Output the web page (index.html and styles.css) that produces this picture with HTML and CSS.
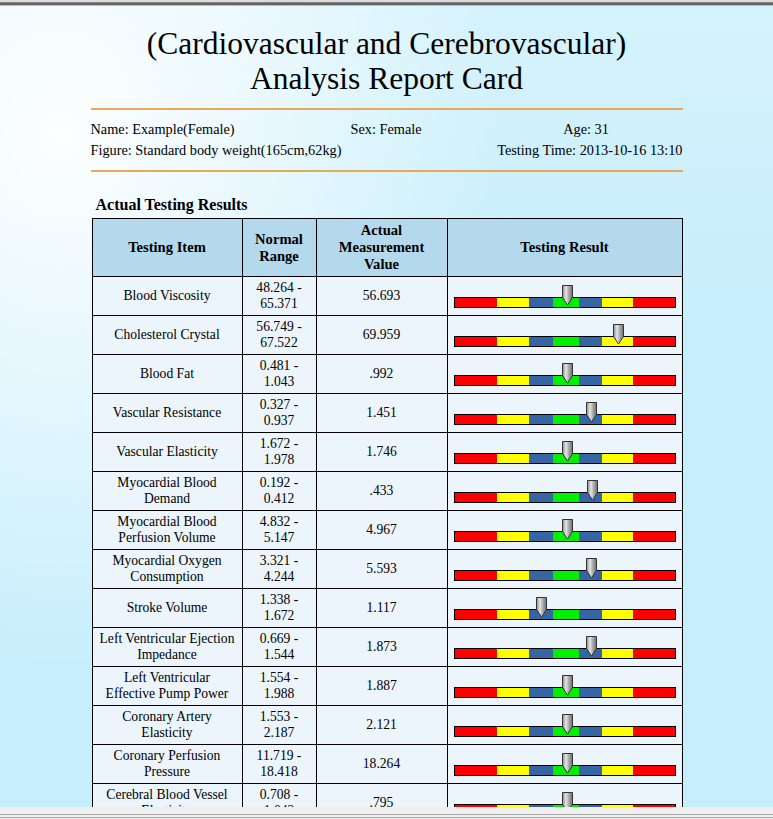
FILE: index.html
```html
<!DOCTYPE html>
<html>
<head>
<meta charset="utf-8">
<link rel="stylesheet" href="styles.css">
</head>
<body>
<div class="frame">
  <div class="topbar"></div>
  <div class="viewport">
    <div class="report">
      <h1 class="title">(Cardiovascular and Cerebrovascular)<br>Analysis Report Card</h1>
      <div class="info">
        <span class="c1">Name: Example(Female)</span>
        <span class="c2">Sex: Female</span>
        <span class="c3">Age: 31</span>
        <span class="c12">Figure: Standard body weight(165cm,62kg)</span>
        <span class="c3r">Testing Time: 2013-10-16 13:10</span>
      </div>
      <h2 class="section">Actual Testing Results</h2>
      <table class="results">
        <colgroup><col class="w1"><col class="w2"><col class="w3"><col class="w4"></colgroup>
        <thead>
          <tr><th>Testing Item</th><th>Normal<br>Range</th><th>Actual<br>Measurement<br>Value</th><th>Testing Result</th></tr>
        </thead>
        <tbody id="rows"></tbody>
      </table>
    </div>
  </div>
  <div class="bottombar"><div class="bl1"></div><div class="bl2"></div></div>
</div>
<script>
var data = [
  ["Blood Viscosity","48.264 -<br>65.371","56.693",108],
  ["Cholesterol Crystal","56.749 -<br>67.522","69.959",159],
  ["Blood Fat","0.481 -<br>1.043",".992",108],
  ["Vascular Resistance","0.327 -<br>0.937","1.451",132],
  ["Vascular Elasticity","1.672 -<br>1.978","1.746",108],
  ["Myocardial Blood<br>Demand","0.192 -<br>0.412",".433",133],
  ["Myocardial Blood<br>Perfusion Volume","4.832 -<br>5.147","4.967",108],
  ["Myocardial Oxygen<br>Consumption","3.321 -<br>4.244","5.593",132],
  ["Stroke Volume","1.338 -<br>1.672","1.117",82],
  ["Left Ventricular Ejection<br>Impedance","0.669 -<br>1.544","1.873",132],
  ["Left Ventricular<br>Effective Pump Power","1.554 -<br>1.988","1.887",108],
  ["Coronary Artery<br>Elasticity","1.553 -<br>2.187","2.121",108],
  ["Coronary Perfusion<br>Pressure","11.719 -<br>18.418","18.264",108],
  ["Cerebral Blood Vessel<br>Elasticity","0.708 -<br>1.042",".795",108]
];
var ptr = '<svg class="ptr" width="11" height="21" viewBox="0 0 11 21"><defs><linearGradient id="g" x1="0" x2="1" y1="0" y2="0"><stop offset="0" stop-color="#8a8a8a"/><stop offset="0.35" stop-color="#e6e6e6"/><stop offset="0.6" stop-color="#b0b0b0"/><stop offset="1" stop-color="#6e6e6e"/></linearGradient></defs><polygon points="0.5,0.5 10.5,0.5 10.5,12.5 5.5,20 0.5,12.5" fill="url(#g)" stroke="#333" stroke-width="1"/></svg>';
var html = "";
data.forEach(function(r){
  html += '<tr><td>'+r[0]+'</td><td>'+r[1]+'</td><td>'+r[2]+'</td><td><div class="gauge"><div class="bar"><i class="r1"></i><i class="y1"></i><i class="b1"></i><i class="g"></i><i class="b2"></i><i class="y2"></i><i class="r2"></i></div><span class="pin" style="left:'+r[3]+'px">'+ptr+'</span></div></td></tr>';
});
document.getElementById("rows").innerHTML = html;
</script>
</body>
</html>
```

FILE: styles.css
```css
html, body {
  margin: 0;
  padding: 0;
}
body {
  font-family: "Liberation Serif", "Times New Roman", serif;
  color: #000;
  background: #c6eefc;
}
.frame {
  width: 773px;
  height: 819px;
  display: flex;
  flex-direction: column;
  overflow: hidden;
}
.topbar {
  height: 6px;
  flex: none;
  background: linear-gradient(#dcdcdc 0, #dcdcdc 2px, #8a8a8a 2px, #5c5c5c 4px, #6a6a6a 5px, #bcbcbc 5px, #bcbcbc 6px);
}
.viewport {
  flex: 1;
  overflow: hidden;
  background:
    radial-gradient(ellipse 440px 540px at 60px 130px, rgba(255,255,255,0.95) 0%, rgba(255,255,255,0.55) 45%, rgba(255,255,255,0) 100%),
    linear-gradient(180deg, #d6f3fd 0%, #c6eefc 40%, #c6eefc 100%);
}
.bottombar {
  height: 12px;
  flex: none;
  background: #efefef;
  display: flex;
  flex-direction: column;
  justify-content: flex-end;
  gap: 2px;
  padding-bottom: 1px;
  box-sizing: border-box;
}
.bl1, .bl2 {
  height: 1px;
  background: #a8a8a8;
}
.report {
  width: 592px;
  margin: 0 auto;
  padding-top: 20px;
}
.title {
  margin: 0;
  font-weight: normal;
  font-size: 31.5px;
  line-height: 35px;
  text-align: center;
  padding-bottom: 12px;
  border-bottom: 2px solid #e9a75c;
}
.info {
  display: grid;
  grid-template-columns: 260px 139px 193px;
  font-size: 14.3px;
  line-height: 21px;
  padding: 9px 0 9px;
  border-bottom: 2px solid #e9a75c;
}
.info .c12 {
  grid-column: 1 / 3;
}
.info .c3 {
  text-align: center;
}
.info .c3r {
  text-align: right;
}
.section {
  margin: 0;
  font-size: 16px;
  line-height: 18px;
  padding: 24px 0 4px 5px;
}
.results {
  border-collapse: collapse;
  table-layout: fixed;
  width: 590px;
  margin-left: 1px;
  font-size: 13.6px;
}
.w1 { width: 150px; }
.w2 { width: 74px; }
.w3 { width: 131px; }
.w4 { width: 235px; }
.results th, .results td {
  border: 1px solid #000;
  text-align: center;
  vertical-align: middle;
  padding: 0;
  line-height: 16px;
}
.results th {
  background: #b5d9ec;
  font-weight: bold;
  height: 57px;
  font-size: 14.6px;
  line-height: 17px;
}
.results td {
  background: #ebf5fb;
  height: 38px;
}
.gauge {
  position: relative;
  width: 222px;
  height: 23px;
  margin: 0 auto;
  display: flex;
  align-items: flex-end;
}
.bar {
  width: 222px;
  height: 11px;
  box-sizing: border-box;
  border: 1px solid #000;
  display: flex;
}
.bar i { display: block; height: 100%; }
.r1 { width: 42px; background: #ff0000; }
.y1 { width: 32px; background: #ffff00; }
.b1 { width: 24px; background: #3366a3; }
.g  { width: 26px; background: #00f000; }
.b2 { width: 23px; background: #3366a3; }
.y2 { width: 31px; background: #ffff00; }
.r2 { width: 42px; background: #ff0000; }
.pin {
  position: absolute;
  top: 0;
  line-height: 0;
}
.ptr { display: block; }
```
